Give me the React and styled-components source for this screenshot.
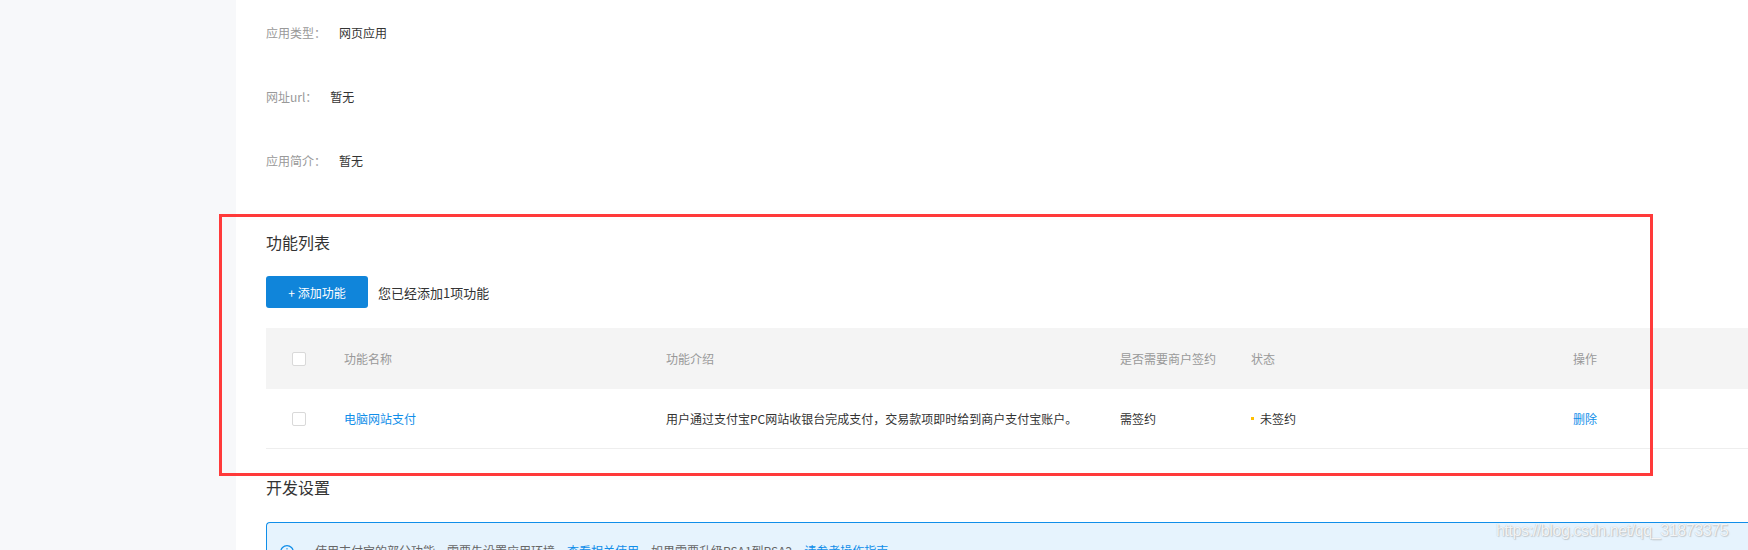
import React from 'react';
import styled, { createGlobalStyle } from 'styled-components';

const GlobalStyle = createGlobalStyle`
  html, body {
    margin: 0;
    padding: 0;
    background: #fff;
  }

  body {
    font-family: 'Noto Sans CJK SC', 'Noto Sans', sans-serif;
    color: #333;
    -webkit-font-smoothing: antialiased;
  }
`;

const Page = styled.div`
  position: relative;
  display: flex;
  width: 1748px;
  height: 550px;
  overflow: hidden;
  background: #fff;
`;

const Sidebar = styled.aside`
  flex: 0 0 236px;
  background: #f7f8fa;
`;

const Main = styled.main`
  flex: 1 1 auto;
  min-width: 0;
  padding-left: 30px;
`;

const InfoList = styled.dl`
  margin: 0;
`;

const InfoRow = styled.div`
  display: flex;
  align-items: center;
  height: 64px;
  font-size: 12px;
`;

const Label = styled.dt`
  color: #999;
  margin-right: 13px;
`;

const Value = styled.dd`
  margin: 0;
  color: #333;
`;

const SectionTitle = styled.h3`
  margin: ${props => props.top}px 0 0;
  font-size: 16px;
  font-weight: 400;
  line-height: 24px;
  color: #333;
`;

const Toolbar = styled.div`
  display: flex;
  align-items: center;
  gap: 10px;
  margin-top: 22px;
`;

const PrimaryButton = styled.button`
  width: 102px;
  height: 32px;
  border: 0;
  border-radius: 3px;
  background: #1085da;
  color: #fff;
  font-family: inherit;
  font-size: 12px;
  cursor: pointer;
`;

const Hint = styled.span`
  font-size: 13px;
  color: #333;
`;

const Table = styled.div`
  margin-top: 20px;
  font-size: 12px;
`;

const Row = styled.div`
  display: grid;
  grid-template-columns: 78px 322px 454px 131px 322px 1fr;
  align-items: center;
  height: ${props => (props.head ? '61px' : '60px')};
  background: ${props => (props.head ? '#f4f4f4' : '#fff')};
  color: ${props => (props.head ? '#999' : '#333')};
  border-bottom: ${props => (props.head ? 'none' : '1px solid #eeeeee')};
  box-sizing: border-box;
`;

const Cell = styled.div`
  display: flex;
  align-items: center;
  padding-left: ${props => (props.check ? '26px' : '0')};
  white-space: nowrap;
`;

const Checkbox = styled.span`
  display: inline-block;
  width: 14px;
  height: 14px;
  border: 1px solid #d9d9d9;
  border-radius: 2px;
  background: #fff;
  box-sizing: border-box;
`;

const LinkText = styled.a`
  color: #108ee9;
  text-decoration: none;
  cursor: pointer;
`;

const StatusDot = styled.span`
  display: inline-block;
  width: 3px;
  height: 3px;
  margin-right: 6px;
  background: #ffbf00;
`;

const Alert = styled.div`
  display: flex;
  align-items: flex-start;
  gap: 21px;
  margin-top: 23px;
  height: 60px;
  padding: 20px 0 0 13px;
  border: 1px solid #108ee9;
  border-right: 0;
  border-radius: 4px 0 0 4px;
  background: #e6f3fd;
  font-size: 12px;
  line-height: 16px;
  color: #666;
  box-sizing: border-box;
`;

const AlertIcon = styled.svg`
  flex: 0 0 auto;
  margin-top: 2px;
`;

const AlertText = styled.p`
  margin: 0;
  white-space: nowrap;
`;

const Annotation = styled.div`
  position: absolute;
  left: 219px;
  top: 214px;
  width: 1434px;
  height: 262px;
  border: 3px solid #ff3a3a;
  box-sizing: border-box;
  pointer-events: none;
`;

const Watermark = styled.span`
  position: absolute;
  left: 1496px;
  top: 522px;
  font-family: 'Liberation Sans', Arial, sans-serif;
  font-size: 16px;
  letter-spacing: -0.4px;
  color: rgba(255, 255, 255, 0.85);
  text-shadow: 0 0 1px rgba(120, 120, 120, 0.45), 1px 1px 1px rgba(150, 150, 150, 0.4);
`;

const details = [
  { label: '应用类型：', value: '网页应用' },
  { label: '网址url：', value: '暂无' },
  { label: '应用简介：', value: '暂无' }
];

const columns = ['功能名称', '功能介绍', '是否需要商户签约', '状态', '操作'];

const features = [
  {
    name: '电脑网站支付',
    intro: '用户通过支付宝PC网站收银台完成支付，交易款项即时给到商户支付宝账户。',
    sign: '需签约',
    status: '未签约'
  }
];

const App = () => (
  <>
    <GlobalStyle />
    <Page>
      <Sidebar />
      <Main>
        <InfoList>
          {details.map(item => (
            <InfoRow key={item.label}>
              <Label>{item.label}</Label>
              <Value>{item.value}</Value>
            </InfoRow>
          ))}
        </InfoList>

        <SectionTitle top={38}>功能列表</SectionTitle>
        <Toolbar>
          <PrimaryButton>+ 添加功能</PrimaryButton>
          <Hint>您已经添加1项功能</Hint>
        </Toolbar>

        <Table>
          <Row head>
            <Cell check><Checkbox /></Cell>
            {columns.map(col => <Cell key={col}>{col}</Cell>)}
          </Row>
          {features.map(f => (
            <Row key={f.name}>
              <Cell check><Checkbox /></Cell>
              <Cell><LinkText>{f.name}</LinkText></Cell>
              <Cell>{f.intro}</Cell>
              <Cell>{f.sign}</Cell>
              <Cell><StatusDot />{f.status}</Cell>
              <Cell><LinkText>删除</LinkText></Cell>
            </Row>
          ))}
        </Table>

        <SectionTitle top={26}>开发设置</SectionTitle>
        <Alert>
          <AlertIcon width="14" height="14" viewBox="0 0 14 14">
            <circle cx="7" cy="7" r="6.3" fill="none" stroke="#108ee9" strokeWidth="1.2" />
            <rect x="6.4" y="3.2" width="1.2" height="1.2" fill="#108ee9" />
            <rect x="6.4" y="5.6" width="1.2" height="5" fill="#108ee9" />
          </AlertIcon>
          <AlertText>
            使用支付宝的部分功能，需要先设置应用环境。<LinkText>查看相关使用</LinkText>，如果需要升级RSA1到RSA2，<LinkText>请参考操作指南</LinkText>
          </AlertText>
        </Alert>
      </Main>
      <Annotation />
      <Watermark>https://blog.csdn.net/qq_31873375</Watermark>
    </Page>
  </>
);

export default App;
